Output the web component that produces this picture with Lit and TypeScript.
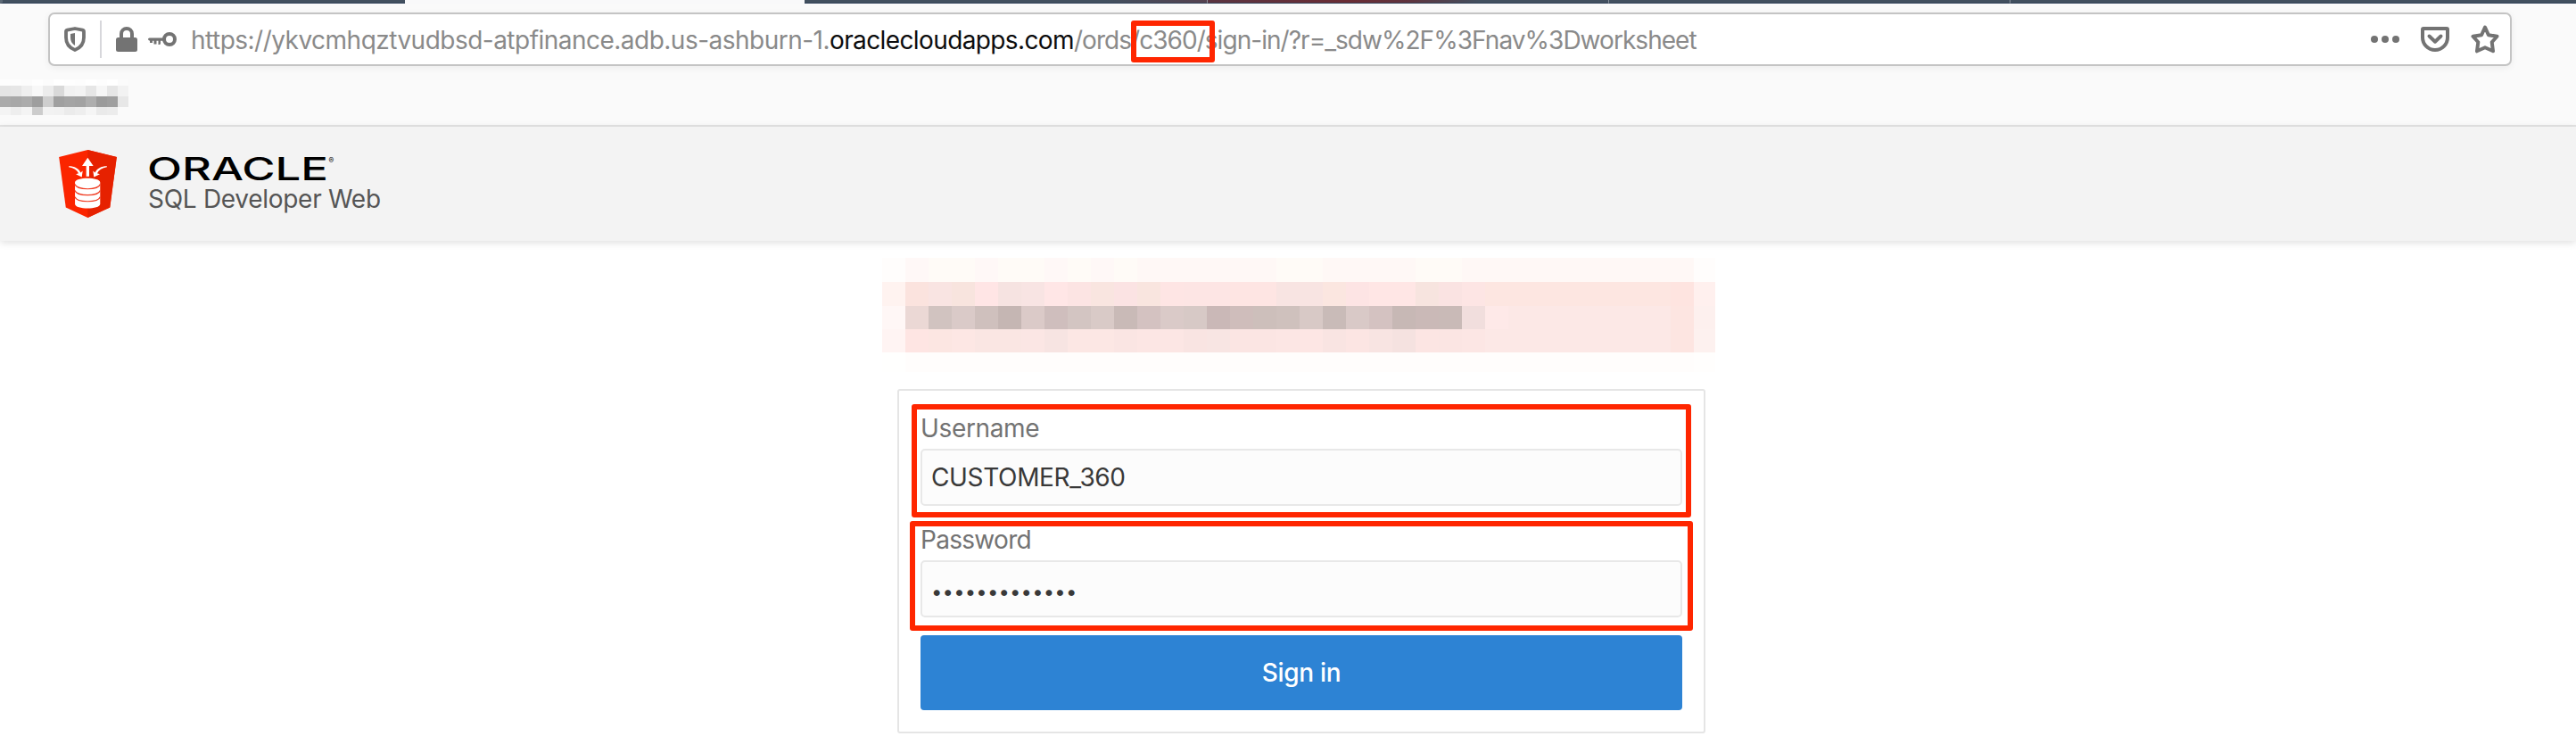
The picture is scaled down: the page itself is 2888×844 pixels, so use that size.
import {LitElement, html, css, svg} from "lit";

const NOTICE_ROWS: {y: number; h: number; colors: string[]}[] = [
  {y: 0, h: 27, colors: ["fffdfc", "fff8f7", "fffbf7", "fffbf7", "fff8f7", "fffbf7", "fffbf7", "fff8f7", "fffbf7", "fff8f7", "fffbf7", ...Array(6).fill("fff8f6"), "fffbf7", "fffbf7", ...Array(4).fill("fff8f6"), "fffbf7", "fffbf7", ...Array(10).fill("fff8f6"), "fffdfc"]},
  {y: 27, h: 27, colors: ["fff3f0", "fbe3de", "f9e4e2", "f8e4de", "ffe5e5", "f6e3e1", "f8e4e3", "ffe6e6", "fce4e3", "f9e5e0", "fbe3e3", "f9e5df", "fee5e4", "fde5e4", "fde5e4", "fee5e3", "fee5e3", "f8e4e2", "f8e4e2", "fbe6e0", "fde4e4", "ffe6e5", "ffe6e5", "f7e4df", "fae3e2", "fde5e4", ...Array(8).fill("fde6e1"), "fee4e0", "fff0ee"]},
  {y: 54, h: 26, colors: ["fff7f6", "ebd8d5", "d1c3c0", "dacac8", "cfc0bd", "c5b6b3", "dbcac8", "cfbebd", "d3c5c2", "d9cac7", "c9bab7", "d4c2c1", "dacac8", "d7c9c6", "cab8b7", "cfbdbb", "cdbfbb", "cfc1bd", "d8c9c6", "c9bbb8", "d9c9c7", "d4c2c1", "c7b8b5", "cab9b7", "c9bab7", "f1dedd", "fee9e8", ...Array(7).fill("fce8e6"), "fde5e1", "fdf0ee"]},
  {y: 80, h: 26, colors: ["fff4f3", "fee5e3", "fce6e2", "fde7e4", "fae6e3", "fae6e3", "fbe6e4", "f7e4e2", "fce7e4", "fce7e4", "fae5e3", "fce6e4", "fce6e4", "f9e4e2", "f8e5e3", "fbe5e3", "fbe5e3", "fce6e4", "fde6e4", "f9e4e2", "fce5e3", "f8e4e2", "f5e2e0", "fce5e3", "fbe5e3", "fce6e4", ...Array(8).fill("fce8e6"), "fde5e1", "fdf1ef"]},
  {y: 106, h: 22, colors: ["fffffe", ...Array(34).fill("fffdfc"), "fffefd"]},
];

const BOOKMARK_ROWS: {y: number; h: number; colors: string[]}[] = [
  {y: 0, h: 7, colors: ["fdfdfd", "fdfdfd", "fcfcfc", "fefefe", "fcfcfc", "ffffff", "fefefe", "fdfdfd", "ffffff", "fdfdfd", "ffffff", "fbfbfb"]},
  {y: 7, h: 12, colors: ["e4e4e4", "e6e6e6", "efefef", "f8f8f8", "ececec", "d9d9d9", "f1f1f1", "f3f3f3", "e6e6e6", "f6f6f6", "e6e6e6", "f2f2f2"]},
  {y: 19, h: 12, colors: ["ababab", "a8a8a8", "acacac", "9e9e9e", "cecece", "a0a0a0", "a4a4a4", "a2a2a2", "aeaeae", "9b9b9b", "9f9f9f", "e7e7e7"]},
  {y: 31, h: 9, colors: ["f4f4f4", "eeeeee", "f4f4f4", "cccccc", "f2f2f2", "f1f1f1", "ebebeb", "eeeeee", "f5f5f5", "eaeaea", "ececec", "fafafa"]},
];

const mosaic = (rows: typeof NOTICE_ROWS, cell: number, limit: number) =>
  rows.map(r => r.colors.map((c, i) => svg`<rect x=${i * cell} y=${r.y} width=${Math.min(cell, limit - i * cell)} height=${r.h} fill=${"#" + c}></rect>`));

const DOTS = Array.from({length: 13}, (_, i) => (6 + i * 12.58).toFixed(2)).join(" ");

class AppRoot extends LitElement {
  static styles = css`
    :host { display: block; height: 844px; overflow: hidden; background: #fff; font: 28px/34px Inter, "Liberation Sans", sans-serif; position: relative; }
    * { box-sizing: border-box; }
    svg { display: block; flex: none; overflow: visible; }
    .tabs { display: grid; grid-template-columns: 454px 448px 451px 450px 450px 1fr; height: 4px; background: #f9f9fa; }
    .tab { background: #42505f; border-bottom: 1px solid #33435a; border-left: 1px solid #8b939d; }
    .tab.first { border-left: 3px solid #5c6976; }
    .tab.active { background: #f9f9fa; border: 0; }
    .tab.plain { border-left: 0; background: linear-gradient(90deg, #42505f 75%, #55424f); }
    .tab.red { background: linear-gradient(90deg, #5a3440, #6a2c34 35%, #5f333d 50%, #42505f 68%); }
    .chrome { height: 138px; background: #fafafa; border-bottom: 2px solid #e3e3e3; padding: 10px 72px 0 54px; }
    .urlbar { display: flex; align-items: center; height: 60px; background: #fff; border: 2px solid #c4c4c4; border-radius: 7px; padding: 0 12px 0 16px; box-shadow: 0 2px 8px rgba(0,0,0,.06); color: #737373; }
    .rule { width: 2px; height: 42px; background: #d7d7db; margin: 0 16px; }
    .key { margin: 0 16px 0 12px; }
    .url { flex: 1; white-space: pre; color: #8a8a8a; padding-top: 2px; }
    .host { letter-spacing: -.517px; }
    .domain { letter-spacing: -.61px; color: #0c0c0d; }
    .path { letter-spacing: -.96px; }
    .more { margin-right: 24px; }
    .pocket { margin-right: 24px; }
    .bookmark { margin: 15px 0 0 -54px; }
    .header { display: flex; height: 128px; background: #f3f3f3; padding: 26px 0 0 66px; box-shadow: 0 2px 8px rgba(0,0,0,.13); position: relative; }
    .brand { margin-left: 34px; padding-top: 6px; }
    .product { color: #555; letter-spacing: -.29px; margin: 0 0 0 1px; }
    .main { padding: 19px 0 0 989px; }
    .card { width: 906px; height: 386px; margin: 19px 0 0 17px; padding: 23px 24px 0; border: 2px solid #e5e5e5; border-radius: 3px; display: flex; flex-direction: column; }
    .label { color: #737373; height: 42px; letter-spacing: -.35px; padding-top: 2px; }
    .label.pass { margin-top: 19px; letter-spacing: -.7px; }
    .input { height: 64px; border: 2px solid #e8e8e8; border-radius: 5px; background: #fcfcfc; color: #393939; display: flex; align-items: center; padding: 0 10px; letter-spacing: -.35px; }
    .button { height: 84px; margin-top: 20px; border: 0; border-radius: 4px; background: #2d83d4; color: #fff; font: 500 28px/34px Inter, "Liberation Sans", sans-serif; letter-spacing: -.3px; padding: 0; }
    .mark { position: absolute; border: 6px solid #ff2600; border-radius: 3px; }
    .mark.path-mark { left: 1268px; top: 23px; width: 94px; height: 47px; }
    .mark.user-mark { left: 1022px; top: 453px; width: 874px; height: 127px; }
    .mark.pass-mark { left: 1020px; top: 584px; width: 878px; height: 123px; }
  `;

  render() {
    return html`
      <div class="tabs">
        <div class="tab first"></div><div class="tab active"></div><div class="tab plain"></div>
        <div class="tab red"></div><div class="tab"></div><div class="tab"></div>
      </div>
      <div class="chrome">
        <div class="urlbar">
          <svg width="24" height="28" viewBox="0 0 24 28">
            <path d="M12 2 L20.5 3.7 Q22 4 22 5.5 V12 C22 19 18.5 23.5 12 26 C5.500 23.500 2 19 2 12 V5.500 Q2 4 3.500 3.700 Z" fill="none" stroke="#737373" stroke-width="3.800" stroke-linejoin="round"/>
            <path d="M12 7 V21 C8.500 19 7 16 7 12 V8 Z" fill="#737373"/>
          </svg>
          <div class="rule"></div>
          <svg width="24" height="28" viewBox="0 0 24 28">
            <path d="M6 14 V8 a6 6 0 0 1 12 0 V14" fill="none" stroke="#737373" stroke-width="4"/>
            <rect y="12" width="24" height="16" rx="2.500" fill="#737373"/>
          </svg>
          <svg class="key" width="32" height="16" viewBox="0 0 32 16">
            <circle cx="24" cy="8" r="6" fill="none" stroke="#737373" stroke-width="4"/>
            <path d="M1.500 6.500 H18 V9.700 H14 V12.500 Q14 14 12.500 14 H11.500 V9.700 H9.500 V13.500 H6.500 V9.700 H5 V12 H2 V9.700 Q0 9 0 8 Q0 6.500 1.500 6.500 Z" fill="#737373"/>
          </svg>
          <div class="url"><span class="host">https://ykvcmhqztvudbsd-atpfinance.adb.us-ashburn-1.</span><span class="domain">oraclecloudapps.com</span><span class="path">/ords/c360/sign-in/?r=_sdw%2F%3Fnav%3Dworksheet</span></div>
          <svg class="more" width="32" height="8" viewBox="0 0 32 8" fill="#737373"><circle cx="4" cy="4" r="4"/><circle cx="16" cy="4" r="4"/><circle cx="28" cy="4" r="4"/></svg>
          <svg class="pocket" width="32" height="28" viewBox="0 0 32 28" fill="none" stroke="#737373" stroke-width="4">
            <path d="M3 2 H29 Q30 2 30 3 V12 A14 14 0 0 1 2 12 V3 Q2 2 3 2 Z"/>
            <path d="M9.500 10.500 L16 16.700 L22.500 10.500" stroke-linecap="round" stroke-linejoin="round"/>
          </svg>
          <svg width="32" height="32" viewBox="0 0 32 32"><path d="M16 2.500 L19.900 11.200 L29.500 12.700 L23.700 19.300 L25 29.300 L16 25.200 L7 29.300 L8.300 19.300 L2.500 12.700 L12.100 11.200 Z" fill="none" stroke="#737373" stroke-width="4" stroke-linejoin="round"/></svg>
        </div>
        <svg class="bookmark" width="144" height="40" shape-rendering="crispEdges">${mosaic(BOOKMARK_ROWS, 12, 144)}</svg>
      </div>
      <div class="header">
        <svg width="65" height="76" viewBox="80 53 195 229">
          <path d="M177 53 L275 77 L252 247 L177 282 L103 247 L80 77 Z" fill="#fb2500"/>
          <path d="M177 53 L275 77 L252 247 L177 282 Z" fill="#e62100"/>
          <path d="M177 79 L196 107 H182 V143 H172 V107 H158 Z" fill="#fff"/>
          <path d="M113 108 C132 108 148 116 153 130 L160 124 L157 145 L137 135 L146 132 C141 121 130 114 113 111 Z M242 108 C223 108 207 116 202 130 L195 124 L198 145 L218 135 L209 132 C214 121 225 114 242 111 Z" fill="#fff"/>
          <path d="M134 163 C134 144 219 144 219 163 V236 C219 255 134 255 134 236 Z" fill="#fff"/>
          <path d="M134 169 C140 190 213 190 219 169 M134 190 C140 211 213 211 219 190 M134 212 C140 232 213 232 219 212" fill="none" stroke="#f03a20" stroke-width="3.500"/>
        </svg>
        <div class="brand">
          <svg width="230" height="32" viewBox="0 0 230 32">
            <text x="0" y="28" font-family="Inter, sans-serif" font-size="35.500" font-weight="500" textLength="203" lengthAdjust="spacingAndGlyphs">ORACLE</text>
            <text x="203.500" y="8.500" font-family="Inter, sans-serif" font-size="8.500">®</text>
          </svg>
          <div class="product">SQL Developer Web</div>
        </div>
      </div>
      <div class="main">
        <svg width="934" height="128" shape-rendering="crispEdges">${mosaic(NOTICE_ROWS, 26, 934)}</svg>
        <div class="card">
          <div class="label">Username</div>
          <div class="input">CUSTOMER_360</div>
          <div class="label pass">Password</div>
          <div class="input"><svg width="170" height="34" viewBox="0 0 170 34"><text x=${DOTS} y="28" text-anchor="middle" font-size="22" fill="#393939">•••••••••••••</text></svg></div>
          <button class="button">Sign in</button>
        </div>
      </div>
      <div class="mark path-mark"></div>
      <div class="mark user-mark"></div>
      <div class="mark pass-mark"></div>
    `;
  }
}
customElements.define("app-root", AppRoot);
